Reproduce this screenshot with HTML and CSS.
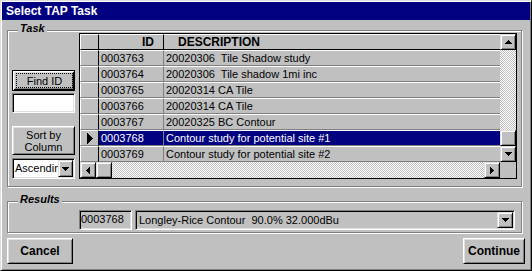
FILE: index.html
```html
<!DOCTYPE html>
<html lang="en">
<head>
    <meta charset="UTF-8">
    <title>Select TAP Task</title>
    <link rel="stylesheet" href="styles.css">
</head>
<body>
    <div class="window">
        <div class="titlebar">Select TAP Task</div>
        <div class="content">
            <div class="group task">
                <span class="group-title">Task</span>
                <div class="side">
                    <button type="button" class="btn btn-default find-btn"><span class="focus">Find ID</span></button>
                    <input type="text" class="sunken find-field">
                    <button type="button" class="btn sort-btn">Sort by<br>Column</button>
                    <div class="sunken combo order">
                        <span class="combo-text">Ascending</span>
                        <span class="drop">
                            <svg width="7" height="4" shape-rendering="crispEdges"><polygon points="0,0 7,0 3.5,4"/></svg>
                        </span>
                    </div>
                </div>

                <div class="grid">
                    <div class="row head">
                        <div class="cell mark"></div>
                        <div class="cell id">ID</div>
                        <div class="cell desc">DESCRIPTION</div>
                    </div>
                    <div class="vscroll">
                        <span class="sbtn"><svg width="7" height="4" shape-rendering="crispEdges"><polygon points="3.5,0 7,4 0,4"/></svg></span>
                        <span class="track"></span>
                        <span class="sbtn thumb"></span>
                        <span class="sbtn"><svg width="7" height="4" shape-rendering="crispEdges"><polygon points="0,0 7,0 3.5,4"/></svg></span>
                    </div>
                    <div class="row">
                        <div class="cell mark"></div>
                        <div class="cell id">0003763</div>
                        <div class="cell desc">20020306  Tile Shadow study</div>
                    </div>
                    <div class="row">
                        <div class="cell mark"></div>
                        <div class="cell id">0003764</div>
                        <div class="cell desc">20020306  Tile shadow 1mi inc</div>
                    </div>
                    <div class="row">
                        <div class="cell mark"></div>
                        <div class="cell id">0003765</div>
                        <div class="cell desc">20020314 CA Tile</div>
                    </div>
                    <div class="row">
                        <div class="cell mark"></div>
                        <div class="cell id">0003766</div>
                        <div class="cell desc">20020314 CA Tile</div>
                    </div>
                    <div class="row">
                        <div class="cell mark"></div>
                        <div class="cell id">0003767</div>
                        <div class="cell desc">20020325 BC Contour</div>
                    </div>
                    <div class="row selected">
                        <div class="cell mark"><svg width="6" height="11" shape-rendering="crispEdges"><polygon points="0,0 6,5.5 0,11"/></svg></div>
                        <div class="cell id">0003768</div>
                        <div class="cell desc">Contour study for potential site #1</div>
                    </div>
                    <div class="row">
                        <div class="cell mark"></div>
                        <div class="cell id">0003769</div>
                        <div class="cell desc">Contour study for potential site #2</div>
                    </div>
                    <div class="hscroll">
                        <span class="sbtn"><svg width="4" height="7" shape-rendering="crispEdges"><polygon points="4,0 4,7 0,3.5"/></svg></span>
                        <span class="sbtn thumb"></span>
                        <span class="track"></span>
                        <span class="sbtn"><svg width="4" height="7" shape-rendering="crispEdges"><polygon points="0,0 4,3.5 0,7"/></svg></span>
                    </div>
                    <div class="corner"></div>
                </div>
            </div>

            <div class="group results">
                <span class="group-title">Results</span>
                <div class="sunken id-box">0003768</div>
                <div class="sunken combo result-combo">
                    <span class="combo-text">Longley-Rice Contour  90.0% 32.000dBu</span>
                    <span class="drop">
                        <svg width="7" height="4" shape-rendering="crispEdges"><polygon points="0,0 7,0 3.5,4"/></svg>
                    </span>
                </div>
            </div>

            <div class="footer">
                <button type="button" class="btn cancel">Cancel</button>
                <button type="button" class="btn continue">Continue</button>
            </div>
        </div>
    </div>
</body>
</html>
```

FILE: styles.css
```css
* {
    box-sizing: border-box;
}

body {
    margin: 0;
    font-family: 'Liberation Sans', Arial, sans-serif;
    font-size: 11px;
    color: #000;
    background: #c0c0c0;
}

.window {
    width: 532px;
    height: 271px;
    padding: 1px;
    background: #c0c0c0;
    border: 1px solid;
    border-color: #dfdfdf #000 #000 #dfdfdf;
    box-shadow: inset 1px 1px #fff, inset -1px -1px #808080;
}

.titlebar {
    height: 18px;
    line-height: 18px;
    padding-left: 4px;
    background: #000080;
    color: #fff;
    font-size: 12px;
    font-weight: bold;
}

.content {
    padding: 10px 5px 0 5px;
}

/* group boxes */
.group {
    position: relative;
    width: 515px;
    border: 1px solid #808080;
    box-shadow: inset 1px 1px #fff, 1px 1px #fff;
}

.group-title {
    position: absolute;
    top: -9px;
    left: 10px;
    padding: 0 2px;
    background: #c0c0c0;
    font-weight: bold;
    font-style: italic;
    line-height: 12px;
}

.task {
    display: flex;
    gap: 4px;
    padding: 2px 4px 7px 4px;
}

.side {
    width: 63px;
    display: flex;
    flex-direction: column;
    justify-content: flex-end;
}

/* buttons and fields */
.btn {
    display: block;
    margin: 0;
    padding: 0;
    font: inherit;
    color: #000;
    background: #c0c0c0;
    border: 1px solid;
    border-color: #fff #000 #000 #fff;
    box-shadow: inset 1px 1px #dfdfdf, inset -1px -1px #808080;
}

.btn-default {
    border-color: #000;
    box-shadow: inset 1px 1px #fff, inset -1px -1px #000, inset 2px 2px #dfdfdf, inset -2px -2px #808080;
}

.find-btn {
    display: flex;
    height: 21px;
    padding: 2px 1px 2px 3px;
}

.focus {
    flex: 1;
    display: flex;
    align-items: center;
    justify-content: center;
    border: 1px dotted #000;
}

.sunken {
    border: 1px solid;
    border-color: #808080 #fff #fff #808080;
    box-shadow: inset 1px 1px #000, inset -1px -1px #dfdfdf;
}

.find-field {
    display: block;
    width: 63px;
    height: 20px;
    margin: 2px 0 13px;
    background: #fff;
    outline: none;
}

.sort-btn {
    height: 29px;
    line-height: 12px;
    margin-bottom: 3px;
}

.combo {
    display: flex;
    padding: 1px;
    white-space: pre;
}

.combo-text {
    flex: 1;
    overflow: hidden;
    padding-left: 1px;
}

.drop {
    width: 15px;
    display: flex;
    align-items: center;
    justify-content: center;
    background: #c0c0c0;
    border: 1px solid;
    border-color: #dfdfdf #000 #000 #dfdfdf;
    box-shadow: inset 1px 1px #fff, inset -1px -1px #808080;
}

.order {
    height: 21px;
    line-height: 17px;
    background: #fff;
}

/* data grid */
.grid {
    display: grid;
    grid-template-columns: 19px 65px 336px 16px;
    grid-template-rows: repeat(9, 16px);
    width: 438px;
    height: 146px;
    border: 1px solid #000;
    white-space: pre;
}

.row {
    display: contents;
}

.cell {
    overflow: hidden;
    padding: 0 2px;
    line-height: 14px;
    border-top: 1px solid #fff;
    border-bottom: 1px solid #808080;
    border-right: 1px solid #808080;
}

.cell.mark {
    border-left: 1px solid #fff;
    border-right-color: #000;
    display: flex;
    align-items: center;
    padding-left: 6px;
}

.cell.desc {
    border-right: none;
}

.head .cell {
    border-bottom-color: #000;
    font-size: 12px;
    font-weight: bold;
}

.head .id {
    border-right-color: #000;
    text-align: right;
    padding-right: 9px;
}

.head .desc {
    padding-left: 14px;
}

.selected .id,
.selected .desc {
    background: #000080;
    color: #fff;
}

.vscroll {
    grid-column: 4;
    grid-row: 1 / 9;
    display: flex;
    flex-direction: column;
}

.hscroll {
    grid-column: 1 / 4;
    grid-row: 9;
    display: flex;
}

.sbtn {
    width: 16px;
    height: 16px;
    flex: none;
    display: flex;
    align-items: center;
    justify-content: center;
    background: #c0c0c0;
    border: 1px solid;
    border-color: #dfdfdf #000 #000 #dfdfdf;
    box-shadow: inset 1px 1px #fff, inset -1px -1px #808080;
}

.track {
    flex: 1;
    background: repeating-conic-gradient(#fff 0 25%, #c0c0c0 0 50%) 0 0 / 2px 2px;
}

.corner {
    grid-column: 4;
    grid-row: 9;
    background: #c0c0c0;
}

/* results */
.results {
    display: flex;
    gap: 3px;
    margin-top: 14px;
    padding: 8px 6px 2px 71px;
}

.id-box {
    width: 53px;
    height: 20px;
    line-height: 16px;
    padding-left: 1px;
}

.result-combo {
    flex: 1;
    height: 20px;
    line-height: 16px;
}

.result-combo .combo-text {
    padding-left: 2px;
}

.result-combo .drop {
    width: 16px;
}

/* footer */
.footer {
    display: flex;
    justify-content: space-between;
    margin-top: 5px;
}

.footer .btn {
    height: 26px;
    font-size: 12px;
    font-weight: bold;
}

.cancel {
    width: 66px;
}

.continue {
    width: 62px;
}
```
